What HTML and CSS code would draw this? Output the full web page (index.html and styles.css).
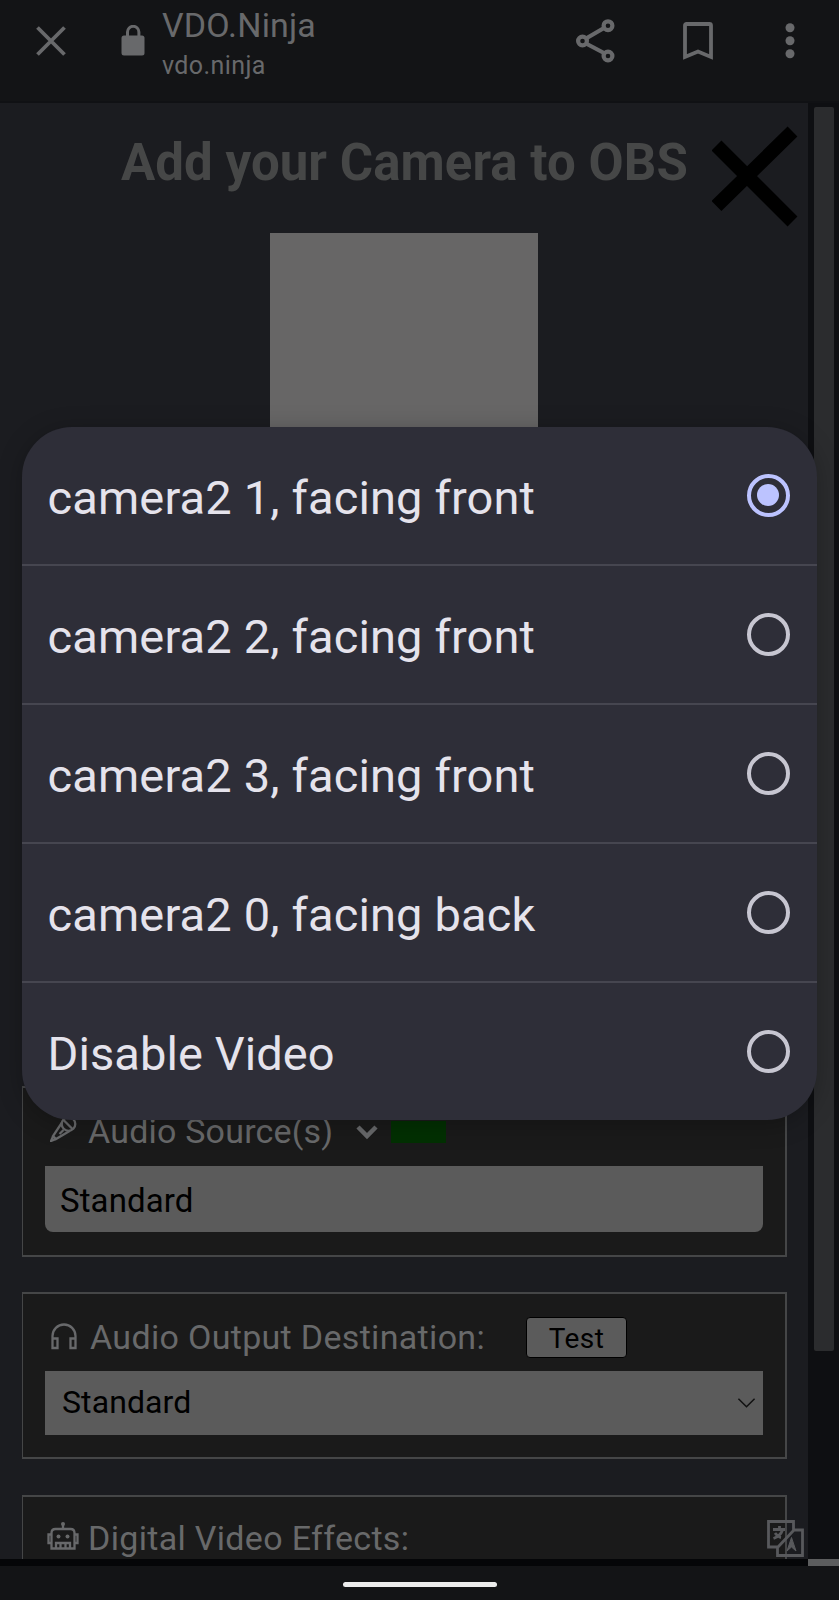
FILE: index.html
```html
<!DOCTYPE html>
<html lang="en">
<head>
<meta charset="utf-8">
<title>VDO.Ninja</title>
<link rel="stylesheet" href="styles.css">
</head>
<body>
<div class="screen">
  <header class="topbar">
    <svg class="close" viewBox="0 0 30 30"><path d="M1.500 1.500 28.500 28.500M28.500 1.500 1.500 28.500"/></svg>
    <svg class="lock" viewBox="0 0 24 31"><rect x="0.500" y="10.500" width="23" height="20" rx="2.500"/><path d="M6.500 11V7a5.700 5.700 0 0 1 11.400 0v4"/></svg>
    <div class="site"><span class="site-name">VDO.Ninja</span><span class="site-url">vdo.ninja</span></div>
    <svg class="share" viewBox="0 0 39 44"><path d="M10 19.500 28 9M10 24.500 28 34"/><circle cx="6.500" cy="22" r="4.400"/><circle cx="32" cy="6.700" r="4.400"/><circle cx="32" cy="37" r="4.400"/></svg>
    <svg class="bookmark" viewBox="0 0 30 38"><path d="M2 35V3.500Q2 2 3.500 2h23Q28 2 28 3.500V35L15 29.500Z"/></svg>
    <svg class="more" viewBox="0 0 10 36"><circle cx="5" cy="4.700" r="4.500"/><circle cx="5" cy="17.800" r="4.500"/><circle cx="5" cy="30.800" r="4.500"/></svg>
  </header>
  <div class="viewport">
    <main class="page">
      <h1 class="title"><span>Add your Camera to OBS</span></h1>
      <div class="preview"></div>
      <section class="panel audio">
        <div class="label">
          <svg class="mic" viewBox="0 0 27 26"><circle cx="18.500" cy="8" r="6.800"/><path d="M12 6.500 3 20 6 23 20 14.800M3 20.500 1 25 6 23M13.500 4 22.500 13M9.500 18l4-4"/></svg>
          <span class="fit-audio">Audio Source(s)</span>
          <svg class="chev" viewBox="0 0 22 16"><path d="M2 3 11 12 20 3"/></svg>
          <span class="meter"></span>
        </div>
        <div class="field rounded"><span>Standard</span></div>
      </section>
      <section class="panel output">
        <div class="label">
          <svg class="phones" viewBox="0 0 26 27"><path d="M1.500 25V13a11.500 11.500 0 0 1 23 0v12M1.500 15.500h5V25h-5ZM24.500 15.500h-5V25h5Z"/></svg>
          <span class="fit-output">Audio Output Destination:</span>
          <span class="test">Test</span>
        </div>
        <div class="field"><span>Standard</span><svg class="arrow" viewBox="0 0 20 12"><path d="M1.500 1.500 10 10 18.500 1.500"/></svg></div>
      </section>
      <section class="panel effects">
        <div class="label">
          <svg class="robot" viewBox="0 0 32 29"><path d="M4.500 27.500V12q0-4 4-4h15q4 0 4 4v15.500ZM16 8V4M4.500 13.500H1.500V22h3M27.500 13.500h3V22h-3M9 27v-5h14v5M13.500 22v5M18.500 22v5"/><circle class="dot" cx="16" cy="3" r="2"/><circle class="dot" cx="11.500" cy="15.500" r="2"/><circle class="dot" cx="20.500" cy="15.500" r="2"/></svg>
          <span class="fit-effects">Digital Video Effects:</span>
        </div>
      </section>
    </main>
    <aside class="scroll"><div class="thumb"></div></aside>
    <svg class="dismiss" viewBox="0 0 86 101"><path d="M4.500 19.500 80.500 95.500M80.500 5.500 4.500 80"/></svg>
    <svg class="translate" viewBox="0 0 37 37"><path d="M1.500 1.500h25v8.500h9v25.500h-25V27h-9ZM11 27 27 10M6 9.500h12M12.500 6v3M15.500 10q-2 6-9 8.500M8 13q3 4 6 4.500"/><path class="letter" d="m20 31 4.500-13.500L29 31l-4.500-4Z"/></svg>
  </div>
  <div class="edge"><span class="corner"></span></div>
  <footer class="navbar"><span class="pill"></span></footer>
  <div class="dialog">
    <div class="option"><span>camera2 1, facing front</span><i class="radio on"></i></div>
    <div class="option"><span>camera2 2, facing front</span><i class="radio"></i></div>
    <div class="option"><span>camera2 3, facing front</span><i class="radio"></i></div>
    <div class="option"><span>camera2 0, facing back</span><i class="radio"></i></div>
    <div class="option"><span>Disable Video</span><i class="radio"></i></div>
  </div>
</div>
</body>
</html>
```
FILE: styles.css
```css
* { box-sizing: border-box; }
body { margin: 0; background: #131417; font-family: Roboto, sans-serif; }
svg { display: block; fill: none; stroke: #68696b; flex: none; }
.screen { position: relative; width: 839px; height: 1600px; display: flex; flex-direction: column; overflow: hidden; }
.topbar { height: 103px; flex: none; background: #131416; display: flex; align-items: flex-start; border-bottom: 2px solid #101114; color: #68696b; }
.close { width: 30px; height: 30px; margin: 26px 0 0 36px; stroke-width: 3.8; }
.lock { width: 24px; height: 31px; margin: 25px 0 0 55px; stroke-width: 3; }
.lock rect { fill: #68696b; stroke: none; }
.site { display: flex; flex-direction: column; width: 414px; margin: 4px 0 0 17px; white-space: nowrap; }
.site-name { font-size: 34px; line-height: 43px; letter-spacing: .15px; }
.site-url { font-size: 25px; line-height: 38px; letter-spacing: .4px; }
.share { width: 39px; height: 44px; margin-top: 19px; stroke-width: 4.200; }
.bookmark { width: 30px; height: 38px; margin: 22px 0 0 68px; stroke-width: 3.8; }
.more { width: 10px; height: 36px; margin: 23px 0 0 72px; fill: #68696b; stroke: none; }
.viewport { position: relative; flex: 1; min-height: 0; display: flex; overflow: hidden; }
.page { width: 808px; height: 1456px; overflow: hidden; background: #1b1c20; }
.title { margin: 0; height: 130px; padding: 30px 0 0 121px; font-size: 51px; line-height: 60px; font-weight: 700; letter-spacing: .05px; color: #464747; white-space: nowrap; }
.preview { width: 268px; height: 268px; margin: 0 0 0 270px; background: #676666; }
.panel { width: 765px; margin-left: 22px; border: 2px solid #454647; border-left-width: 1px; background: #1a1a1a; padding: 0 22px; }
.audio { margin-top: 585px; height: 171px; }
.output { margin-top: 35px; height: 167px; }
.effects { margin-top: 36px; height: 100px; }
.label { display: flex; align-items: flex-start; height: 78px; font-size: 34px; line-height: 40px; color: #68696a; white-space: nowrap; padding-top: 23px; }
.output .label { height: 77px; padding-top: 23px; }
.effects .label { padding-top: 21px; }
.fit-audio { letter-spacing: .2px; }
.fit-output { letter-spacing: .32px; }
.fit-effects { letter-spacing: .32px; }
.mic { width: 27px; height: 26px; margin: 5px 11px 0 5px; stroke-width: 2.300; }
.chev { width: 22px; height: 16px; margin: 13px 13px 0 23px; stroke-width: 4.500; }
.meter { width: 55px; height: 22px; margin-top: 10px; background: #023002; }
.phones { width: 26px; height: 27px; margin: 6px 13px 0 6px; stroke-width: 2.300; }
.robot { width: 32px; height: 29px; margin: 3px 9px 0 2px; stroke-width: 2.300; }
.dot { fill: #68696a; stroke: none; }
.field { width: 718px; height: 64px; padding: 0 7px 2px 17px; background: #5b5b5b; display: flex; align-items: center; justify-content: space-between; font-size: 32px; letter-spacing: .1px; color: #000; }
.rounded { height: 66px; padding: 2px 0 0 15px; border-radius: 0 0 8px 8px; font-size: 33px; }
.arrow { width: 19px; height: 12px; margin-top: 2px; stroke: #111; stroke-width: 1.600; }
.test { width: 101px; height: 41px; margin: 0 0 0 41px; border: 1px solid #000; border-radius: 4px; background: #5b5b5b; color: #000; font-size: 28px; line-height: 42px; letter-spacing: .4px; text-align: center; }
.scroll { width: 31px; background: #0e0f12; padding: 4px 5px 0 6px; }
.thumb { height: 1244px; background: #2b2c2e; border-radius: 2px; }
.dismiss { position: absolute; left: 712px; top: 23px; width: 86px; height: 101px; stroke: #000; stroke-width: 14; }
.translate { position: absolute; left: 767px; top: 1417px; width: 37px; height: 37px; stroke: #58595c; stroke-width: 2.800; }
.letter { fill: #58595c; stroke-width: 1; }
.edge { height: 7px; flex: none; background: #050608; display: flex; justify-content: flex-end; }
.corner { width: 31px; height: 7px; background: #5c5d5e; }
.navbar { height: 34px; flex: none; background: #131416; display: flex; justify-content: center; align-items: flex-start; padding-top: 16px; }
.pill { width: 154px; height: 5px; border-radius: 3px; background: #ececec; }
.dialog { position: absolute; left: 22px; top: 427px; width: 795px; height: 693px; border-radius: 50px; background: #2e2e38; overflow: hidden; box-shadow: 0 4px 24px rgba(0,0,0,.25); display: flex; flex-direction: column; }
.option { height: 139px; flex: none; padding: 3px 27.500px 0 25.500px; display: flex; align-items: center; justify-content: space-between; border-bottom: 2px solid #464650; font-size: 47px; letter-spacing: .15px; color: #e5e3ec; white-space: nowrap; }
.option:last-child { height: 137px; border-bottom: 0; letter-spacing: .08px; }
.radio { width: 43px; height: 43px; margin-top: -4px; border: 4px solid #c7c6d1; border-radius: 50%; display: grid; place-items: center; }
.radio.on { border-color: #bcc3ff; }
.radio.on::after { content: ""; width: 22px; height: 22px; border-radius: 50%; background: #bcc3ff; }
```
